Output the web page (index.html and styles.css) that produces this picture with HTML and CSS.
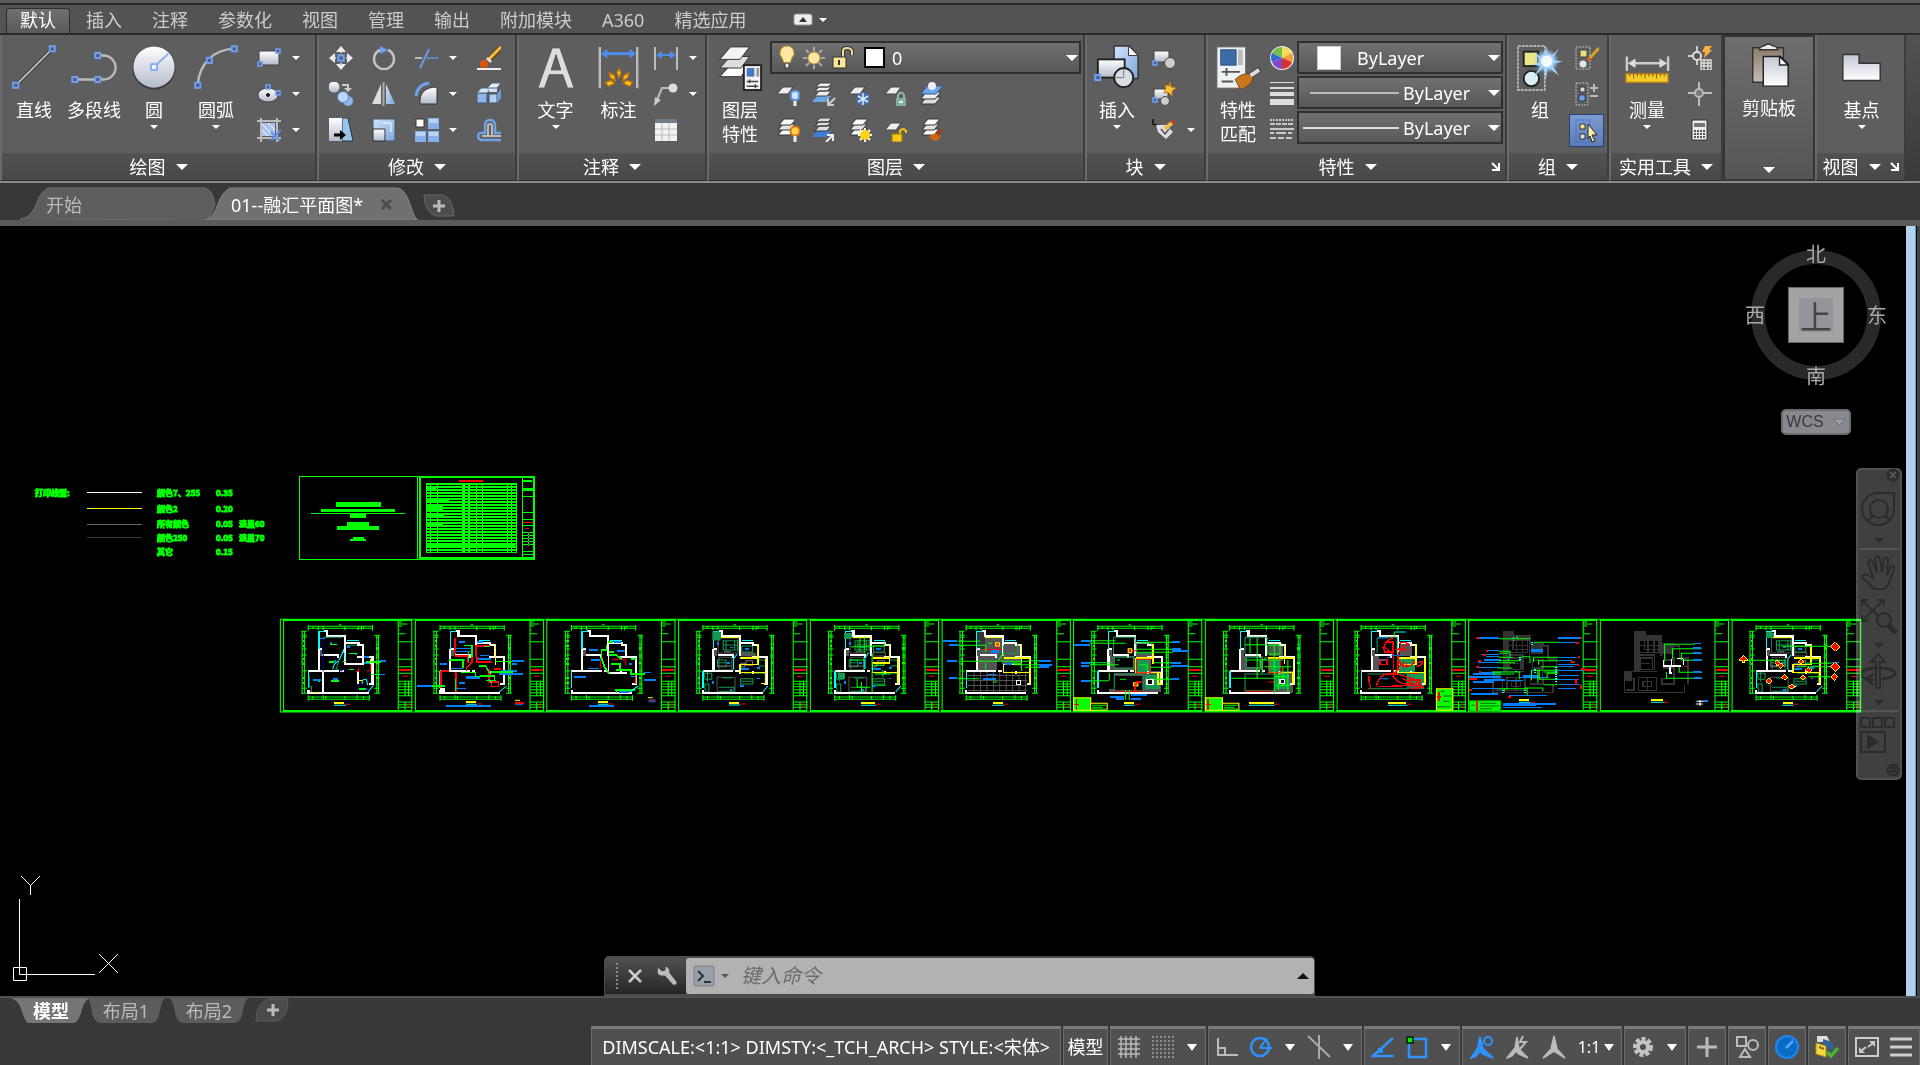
FILE: index.html
```html
<!DOCTYPE html>
<html lang="zh-CN">
<head>
    <meta charset="UTF-8">
    <meta name="viewport" content="width=device-width, initial-scale=1.0">
    <title>01--融汇平面图</title>
    <link rel="stylesheet" href="styles.css">
</head>
<body>
    <!-- shared gradients and symbols -->
    <svg class="defs" width="0" height="0" aria-hidden="true">
        <defs>
            <linearGradient id="silver" x1="0" y1="0" x2="0" y2="1"><stop offset="0" stop-color="#fff"/><stop offset="1" stop-color="#b4bac9"/></linearGradient>
            <linearGradient id="silver-up" x1="0" y1="0" x2="0" y2="1"><stop offset="0" stop-color="#c3c7d2"/><stop offset="1" stop-color="#fff"/></linearGradient>
            <linearGradient id="ice" x1="0" y1="0" x2="1" y2="1"><stop offset="0" stop-color="#d3e5fa"/><stop offset="1" stop-color="#7ba6de"/></linearGradient>
            <linearGradient id="brown" x1="0" y1="0" x2="0" y2="1"><stop offset="0" stop-color="#8d7b6a"/><stop offset="1" stop-color="#c5bcb2"/></linearGradient>
            <radialGradient id="glow"><stop offset="0" stop-color="#fff"/><stop offset=".5" stop-color="#bfe2ff"/><stop offset="1" stop-color="#7fc0f8" stop-opacity="0"/></radialGradient>
            <symbol id="node" viewBox="0 0 6 6"><rect x="1" y="1" width="4" height="4" fill="#4a5c80" stroke="#6f9ff0" stroke-width="1.6"/></symbol>
            <symbol id="sheets" viewBox="0 0 24 24">
                <path d="M7 13h12l-5 6H2z" fill="#fff" stroke="#333"/><path d="M7 8h12l-5 6H2z" fill="#e4e4e4" stroke="#333"/><path d="M8 3h12l-5 6H3z" fill="#fff" stroke="#333"/>
            </symbol>
            <symbol id="sheet" viewBox="0 0 24 24"><path d="M7 5h10l-5 7H1z" fill="#eee" stroke="#444"/></symbol>
        </defs>
    </svg>

    <nav class="menu">
        <button class="menu-tab active">默认</button>
        <button class="menu-tab">插入</button>
        <button class="menu-tab">注释</button>
        <button class="menu-tab">参数化</button>
        <button class="menu-tab">视图</button>
        <button class="menu-tab">管理</button>
        <button class="menu-tab">输出</button>
        <button class="menu-tab">附加模块</button>
        <button class="menu-tab">A360</button>
        <button class="menu-tab">精选应用</button>
        <button class="menu-min" aria-label="最小化功能区">
            <svg width="20" height="14" viewBox="0 0 20 14"><rect x="1" y="1" width="18" height="11" rx="2" fill="#eee" stroke="#999"/><path d="M6 9l4-5 4 5z" fill="#333"/></svg>
            <span class="arrow"></span>
        </button>
    </nav>

    <main class="ribbon">
        <section class="panel draw">
            <div class="panel-body">
                <button class="big">
                    <svg viewBox="0 0 48 48"><path d="M5 42L43 4" stroke="#333" stroke-width="4"/><path d="M5 42L43 4" stroke="#bbb" stroke-width="2"/><use href="#node" x="1" y="38" width="8" height="8"/><use href="#node" x="39" y="0" width="8" height="8"/></svg>
                    <span>直线</span>
                </button>
                <button class="big">
                    <svg viewBox="0 0 48 48"><path d="M4 36H34a12 12 0 0 0 0-25H28" fill="none" stroke="#bbb" stroke-width="2.5"/><use href="#node" x="0" y="32" width="8" height="8"/><use href="#node" x="24" y="32" width="8" height="8"/><use href="#node" x="24" y="7" width="8" height="8"/></svg>
                    <span>多段线</span>
                </button>
                <button class="big">
                    <svg viewBox="0 0 48 48"><circle cx="24" cy="24" r="22.5" fill="#3c3c3c"/><circle cx="24" cy="23" r="21.5" fill="url(#silver)"/><path d="M26 21L39 9" stroke="#7eaef5" stroke-width="2"/><rect x="21" y="20" width="6" height="6" fill="#fff" stroke="#7eaef5" stroke-width="2"/></svg>
                    <span>圆</span><i class="arrow"></i>
                </button>
                <button class="big">
                    <svg viewBox="0 0 48 48"><path d="M5 42C6 20 22 4 43 4" fill="none" stroke="#bbb" stroke-width="2.5"/><use href="#node" x="1" y="38" width="8" height="8"/><use href="#node" x="13" y="12" width="8" height="8"/><use href="#node" x="39" y="0" width="8" height="8"/></svg>
                    <span>圆弧</span><i class="arrow"></i>
                </button>
                <div class="tools with-drop">
                    <button class="tool" aria-label="矩形"><svg viewBox="0 0 24 24"><rect x="2" y="5" width="20" height="14" fill="url(#silver)" stroke="#444"/><use href="#node" x="18" y="2" width="6" height="6"/><use href="#node" x="0" y="15" width="6" height="6"/></svg></button><button class="drop" aria-label="矩形选项"></button>
                    <button class="tool" aria-label="椭圆"><svg viewBox="0 0 24 24"><ellipse cx="11" cy="13" rx="10" ry="7" fill="url(#silver)" stroke="#444"/><path d="M11 11v4M9 13h4" stroke="#222" stroke-width="2"/><use href="#node" x="8" y="2" width="6" height="6"/><use href="#node" x="18" y="8" width="6" height="6"/></svg></button><button class="drop" aria-label="椭圆选项"></button>
                    <button class="tool" aria-label="图案填充"><svg viewBox="0 0 24 24"><path d="M0 3h24M0 20h24M4 0v24M20 0v24" stroke="#bbb" stroke-width="2"/><rect x="5" y="5" width="13" height="13" fill="#a9c4ee"/><path d="M5 12l6 6M5 6l12 12M11 5l7 7" stroke="#fff"/><path d="M14 22l10-10M14 14l9 9" stroke="#5b90e6" stroke-width="2"/></svg></button><button class="drop" aria-label="图案填充选项"></button>
                </div>
            </div>
            <button class="panel-title">绘图<i class="arrow"></i></button>
        </section>

        <section class="panel modify">
            <div class="panel-body">
                <div class="tools four">
                    <button class="tool" aria-label="移动"><svg viewBox="0 0 24 24"><path d="M12 0l5 6H7zM12 24l5-6H7zM0 12l6-5v10zM24 12l-6-5v10z" fill="#eee"/><path d="M5 12h14M12 5v14" stroke="#ccc" stroke-width="2"/><path d="M7 7h10v10H7z" fill="#5e5e5e"/><use href="#node" x="8" y="8" width="8" height="8"/></svg></button>
                    <button class="tool" aria-label="旋转"><svg viewBox="0 0 24 24"><path d="M8 4a10 10 0 1 0 8 0" fill="none" stroke="#c5c5c5" stroke-width="2.5"/><path d="M8 0v8l8-4z" fill="#6ba1f3"/></svg></button>
                    <button class="tool" aria-label="修剪"><svg viewBox="0 0 24 24"><path d="M0 12h7" stroke="#bbb" stroke-width="2"/><path d="M12 12h12" stroke="#5e91df" stroke-width="2" stroke-dasharray="3 1"/><path d="M5 22L14 3" stroke="#6a9ae3" stroke-width="2"/></svg></button><button class="drop" aria-label="修剪选项"></button>
                    <button class="tool" aria-label="删除"><svg viewBox="0 0 24 24"><path d="M0 23h24" stroke="#eee" stroke-width="2"/><path d="M11 15L24 1" stroke="#6d4a10" stroke-width="6"/><path d="M11 14L24 1" stroke="#f3bd48" stroke-width="3"/><path d="M11 15l2-2" stroke="#ddd" stroke-width="6"/><circle cx="7" cy="18" r="4" fill="#e0510f"/></svg></button>
                    <button class="tool" aria-label="复制"><svg viewBox="0 0 24 24"><circle cx="5" cy="5" r="5.5" fill="url(#silver)"/><circle cx="19" cy="19" r="5" fill="#8bb6ec"/><circle cx="14" cy="15" r="5.5" fill="#bdd6f7" stroke="#5b83bd"/><path d="M13 3h6v4" fill="none" stroke="#ccc" stroke-width="2"/><path d="M15 6h8l-4 4z" fill="#ccc"/></svg></button>
                    <button class="tool" aria-label="镜像"><svg viewBox="0 0 24 24"><path d="M9 2v20H0z" fill="#ddd"/><path d="M14 2v20h9z" fill="url(#ice)"/><path d="M11.5 0v24" stroke="#aaa" stroke-width="2"/></svg></button>
                    <button class="tool" aria-label="圆角"><svg viewBox="0 0 24 24"><path d="M1 14C2 6 7 2 14 1" fill="none" stroke="#6fa3ee" stroke-width="3"/><path d="M5 22C4 11 10 5 22 5v17z" fill="url(#silver)" stroke="#333"/></svg></button><button class="drop" aria-label="圆角选项"></button>
                    <button class="tool" aria-label="分解"><svg viewBox="0 0 24 24"><path d="M0 11h10v10H0z" fill="#8bb6ec" stroke="#456"/><path d="M0 11l4-5h10l-4 5z" fill="#d2e5fb" stroke="#567"/><path d="M12 12h8v9h-8z" fill="#b2cff2" stroke="#456"/><path d="M20 12l4-5v9l-4 5z" fill="#6f9cd6"/><path d="M12 6h8v4h-8z" fill="#cfe2fa"/><path d="M10 6l5-5h9l-4 5z" fill="#e2eefc" stroke="#567"/></svg></button>
                    <button class="tool" aria-label="拉伸"><svg viewBox="0 0 24 24"><path d="M13 0h6l5 23H13z" fill="#9ac3e8" stroke="#234"/><path d="M0 0h13v23H0z" fill="url(#silver)"/><path d="M5 17h7" stroke="#000" stroke-width="3"/><path d="M11 12l6 5-6 5z"/></svg></button>
                    <button class="tool" aria-label="缩放"><svg viewBox="0 0 24 24"><path d="M1 1h22v22H1z" fill="url(#ice)" stroke="#456"/><path d="M1 11h12v12H1z" fill="url(#silver)" stroke="#333"/><path d="M11 5h8v9" fill="none" stroke="#fff"/></svg></button>
                    <button class="tool" aria-label="阵列"><svg viewBox="0 0 24 24"><path d="M1 1h8v8H1z" fill="#fff" stroke="#333"/><path d="M13 0h11v11H13zM0 13h11v11H0zM13 13h11v11H13z" fill="#86b0ec"/><path d="M14 1h9v4h-9zM1 14h9v4H1zM14 14h9v4h-9z" fill="#b9d3f7"/></svg></button><button class="drop" aria-label="阵列选项"></button>
                    <button class="tool" aria-label="偏移"><svg viewBox="0 0 24 24"><path d="M24 22H4q-3-1-3-4t3-3h4V6q1-4 5-4t5 4v9h6" fill="none" stroke="#6da2e8" stroke-width="2.5"/><path d="M24 18H5h6V7q2-2 4 0v11" fill="none" stroke="#bbb" stroke-width="2"/></svg></button>
                </div>
            </div>
            <button class="panel-title">修改<i class="arrow"></i></button>
        </section>

        <section class="panel annotate">
            <div class="panel-body">
                <button class="big">
                    <svg viewBox="0 0 48 48"><path d="M20 3h8l15 42h-7l-5-14H17l-5 14H5zM19 26h10L24 10z" fill="#ddd" stroke="#555"/></svg>
                    <span>文字</span><i class="arrow"></i>
                </button>
                <button class="big">
                    <svg viewBox="0 0 48 48"><path d="M4 2v43M43 2v43" stroke="#bbb" stroke-width="2.5"/><path d="M8 9h31" stroke="#4f8df0" stroke-width="3"/><path d="M5 9l7-5v10zM42 9l-7-5v10z" fill="#4f8df0"/><path d="M24 25l2 4-2 5-2-5zM14 29l5 3 1 5-5-3zM34 29l-5 3-1 5 5-3zM10 39l6-2 3 3-6 3zM38 39l-6-2-3 3 6 3z" fill="#fbd01f" stroke="#d2770c" stroke-width="1.5"/></svg>
                    <span>标注</span>
                </button>
                <div class="tools with-drop">
                    <button class="tool" aria-label="线性"><svg viewBox="0 0 24 24"><path d="M1 1v23M23 1v23" stroke="#bbb" stroke-width="2"/><path d="M4 9h16" stroke="#4f8df0" stroke-width="2"/><path d="M2 9l6-4v8zM22 9l-6-4v8z" fill="#4f8df0"/></svg></button><button class="drop" aria-label="线性选项"></button>
                    <button class="tool" aria-label="引线"><svg viewBox="0 0 24 24"><path d="M3 18L8 6h8" fill="none" stroke="#bbb" stroke-width="2"/><circle cx="19" cy="6" r="4.5" fill="#ddd"/><path d="M0 24l1-9 6 3z" fill="#ccc"/></svg></button><button class="drop" aria-label="引线选项"></button>
                    <button class="tool" aria-label="表格"><svg viewBox="0 0 24 24"><path d="M1 1h22v22H1z" fill="#f2f2f2"/><path d="M1 1h22v4H1z" fill="#747c8c"/><path d="M1 11h22M1 17h22M8 5v18M15 5v18" stroke="#bbb"/></svg></button>
                </div>
            </div>
            <button class="panel-title">注释<i class="arrow"></i></button>
        </section>

        <section class="panel layers">
            <div class="panel-body">
                <button class="big">
                    <svg viewBox="0 0 48 48"><path d="M14 21h20L25 33H3z" fill="#fff" stroke="#333"/><path d="M14 12h20L25 24H3z" fill="#ddd" stroke="#333"/><path d="M14 2h20L24 15H3z" fill="#f4f4f4" stroke="#333"/><rect x="28" y="21" width="18" height="26" fill="#f3f3f3" stroke="#222" stroke-width="2"/><rect x="31" y="24" width="8" height="9" fill="#4779c4"/><path d="M41 24h3v9h-3z" fill="#999"/><path d="M31 38h12M31 43h12M34 36v4M40 41v4" stroke="#444" stroke-width="1.5"/></svg>
                    <span>图层<br>特性</span>
                </button>
                <div class="layer-side">
                    <label class="combo">
                        <svg width="20" height="26" viewBox="0 0 20 26"><path d="M10 1a7 7 0 0 0-5 12l2 5h6l2-5A7 7 0 0 0 10 1z" fill="#ffe9a0" stroke="#b88a20"/><path d="M8 18h4v5H8z" fill="#eee" stroke="#333"/></svg>
                        <svg width="24" height="24" viewBox="0 0 24 24"><path d="M12 1v22M1 12h22M4 4l16 16M20 4L4 20" stroke="#aaa" stroke-width="2" stroke-dasharray="4 14 5"/><circle cx="12" cy="12" r="6" fill="#ffe7a0" stroke="#c79b43"/></svg>
                        <svg width="24" height="24" viewBox="0 0 24 24"><path d="M12 12V5q0-3 4-3t5 3v4" fill="none" stroke="#333" stroke-width="4"/><path d="M12 12V5q0-3 4-3t5 3v4" fill="none" stroke="#f3dd94" stroke-width="2"/><path d="M2 11h13v11H2z" fill="#fbe697" stroke="#333"/><path d="M8 14v5" stroke="#333" stroke-width="2"/></svg>
                        <span class="swatch black"></span>
                        <select aria-label="图层"><option>0</option></select>
                    </label>
                    <div class="tools five">
                        <button class="tool" aria-label="关"><svg viewBox="0 0 24 24"><use href="#sheet"/><rect x="15" y="9" width="8" height="9" rx="3" fill="#cfe5ff" stroke="#5d93d8" stroke-width="2"/><path d="M19 19v5" stroke="#eee" stroke-width="3"/></svg></button>
                        <button class="tool" aria-label="隔离"><svg viewBox="0 0 24 24"><path d="M5 14h14l-5 6H0z" fill="#6ea5e4"/><path d="M7 9h12l-4 5H3zM7 5h12l-4 4H3zM8 1h12l-4 4H4z" fill="#eee" stroke="#444"/><path d="M23 16l-7 7m0-6v6h6" fill="none" stroke="#ccc" stroke-width="2"/></svg></button>
                        <button class="tool" aria-label="冻结"><svg viewBox="0 0 24 24"><use href="#sheet"/><circle cx="15" cy="17" r="6.5" fill="#3f75bd"/><path d="M15 11v12M10 14l10 6M20 14l-10 6" stroke="#dfebff" stroke-width="1.5"/></svg></button>
                        <button class="tool" aria-label="锁定"><svg viewBox="0 0 24 24"><use href="#sheet"/><path d="M14 16v-3q3-5 6 0v3" fill="none" stroke="#8fb8b0" stroke-width="2"/><path d="M12 16h10v8H12z" fill="#82aea4"/><path d="M15 20h4" stroke="#e2f2ee" stroke-width="2"/></svg></button>
                        <button class="tool" aria-label="置为当前"><svg viewBox="0 0 24 24"><path d="M6 15h15l-6 7H1z" fill="#ddd" stroke="#333"/><path d="M6 10h15l-6 7H1z" fill="#eee" stroke="#333"/><path d="M7 4h16l-7 8H1z" fill="#6fa5ea" stroke="#355b8e"/><circle cx="12" cy="4" r="4" fill="#eee"/></svg></button>
                        <button class="tool" aria-label="打开所有图层"><svg viewBox="0 0 24 24"><use href="#sheets" y="-2"/><circle cx="19" cy="13" r="4.5" fill="#ffd34c" stroke="#df7810" stroke-width="2"/><path d="M19 18v6" stroke="#eee" stroke-width="3"/></svg></button>
                        <button class="tool" aria-label="取消隔离"><svg viewBox="0 0 24 24"><path d="M5 13h14l-5 6H0z" fill="#3f7ed8"/><path d="M7 8h12l-4 5H3zM7 4h12l-4 4H3zM8 0h12l-4 4H4z" fill="#ddd" stroke="#333"/><path d="M14 24l7-7m-6 0h6v6" fill="none" stroke="#eee" stroke-width="2"/></svg></button>
                        <button class="tool" aria-label="解冻"><svg viewBox="0 0 24 24"><use href="#sheets" y="-2"/><path d="M17 10v14M10 17h14M12 12l10 10M22 12L12 22" stroke="#fff" stroke-width="2"/><circle cx="17" cy="17" r="5" fill="#ffd317"/></svg></button>
                        <button class="tool" aria-label="解锁"><svg viewBox="0 0 24 24"><use href="#sheet"/><path d="M16 17v-4q3-4 6 0v2" fill="none" stroke="#f4c40e" stroke-width="2"/><path d="M8 16h10v8H8z" fill="#f5c717" stroke="#9a7700"/></svg></button>
                        <button class="tool" aria-label="匹配图层"><svg viewBox="0 0 24 24"><use href="#sheets" y="-2"/><path d="M9 18l7-3 5 3-4 5-5-1z" fill="#cc6715"/><path d="M17 17l5-5" stroke="#a73b0c" stroke-width="3"/></svg></button>
                    </div>
                </div>
            </div>
            <button class="panel-title">图层<i class="arrow"></i></button>
        </section>

        <section class="panel block">
            <div class="panel-body">
                <button class="big">
                    <svg viewBox="0 0 48 48"><path d="M21 1h16l9 10v24H21z" fill="url(#ice)" stroke="#333" stroke-width="1.5"/><path d="M36 1v10h10z" fill="#fff" stroke="#333"/><rect x="4" y="15" width="28" height="19" fill="url(#silver)" stroke="#222" stroke-width="2"/><circle cx="31" cy="34" r="10" fill="#d8dce4" stroke="#222" stroke-width="2"/><path d="M31 25v9h-8" fill="none" stroke="#777"/><use href="#node" x="0" y="30" width="8" height="8"/></svg>
                    <span>插入</span><i class="arrow"></i>
                </button>
                <div class="tools with-drop">
                    <button class="tool" aria-label="创建块"><svg viewBox="0 0 24 24"><rect x="2" y="5" width="15" height="11" fill="url(#silver)" stroke="#444"/><circle cx="18" cy="17" r="5.5" fill="#ccc" stroke="#444"/><use href="#node" x="0" y="14" width="6" height="6"/></svg></button><span></span>
                    <button class="tool" aria-label="编辑块"><svg viewBox="0 0 24 24"><rect x="2" y="7" width="14" height="10" fill="url(#silver)" stroke="#444"/><circle cx="13" cy="19" r="4.5" fill="#ccc" stroke="#444"/><path d="M18 0l1 5 5 1-4 3v5l-4-4-4 1 2-5-1-3 4 1z" fill="#ffc43a" stroke="#c87a10"/><use href="#node" x="0" y="15" width="6" height="6"/></svg></button><span></span>
                    <button class="tool" aria-label="编辑属性"><svg viewBox="0 0 24 24"><path d="M1 1v5l6 2" fill="none" stroke="#222" stroke-width="2"/><path d="M4 7h10l7 7-7 7-8-7z" fill="#ddd"/><path d="M9 11l4 5 4-5" fill="none" stroke="#555" stroke-width="1.5"/><path d="M13 11L22 3" stroke="#f3b84a" stroke-width="4"/><path d="M20 5l2-2" stroke="#b33b14" stroke-width="5"/></svg></button><button class="drop" aria-label="编辑属性选项"></button>
                </div>
            </div>
            <button class="panel-title">块<i class="arrow"></i></button>
        </section>

        <section class="panel properties">
            <div class="panel-body">
                <button class="big">
                    <svg viewBox="0 0 48 48"><rect x="2" y="2" width="30" height="43" fill="#eff2f5" stroke="#666"/><rect x="6" y="5" width="16" height="16" fill="#3c6ca8" stroke="#274f80"/><path d="M24 5h5v16h-5z" fill="#bbb"/><path d="M7 28h19M7 38h12M12 24v8" stroke="#555" stroke-width="2"/><path d="M21 36q8-8 17-5l2 3q-3 10-14 12-2-5-5-10z" fill="#c9761c" stroke="#754310"/><path d="M37 32l10-7" stroke="#444" stroke-width="6"/><path d="M37 32l9-6" stroke="#ddd" stroke-width="4"/></svg>
                    <span>特性<br>匹配</span>
                </button>
                <div class="tools">
                    <button class="tool" aria-label="颜色"><svg viewBox="0 0 24 24"><circle cx="12" cy="12" r="12" fill="#eee"/><path d="M12 12L2 7A11 11 0 0 1 12 1z" fill="#75c04b"/><path d="M12 12V1a11 11 0 0 1 10 6z" fill="#f3dc57"/><path d="M12 12l10-5a11 11 0 0 1 0 9z" fill="#ee9c3e"/><path d="M12 12l10 4a11 11 0 0 1-10 7z" fill="#db3030"/><path d="M12 12v11a11 11 0 0 1-10-7z" fill="#8746c9"/><path d="M12 12L2 16a11 11 0 0 1 0-9z" fill="#2e69d6"/></svg></button>
                    <button class="tool" aria-label="线宽"><svg viewBox="0 0 24 24"><path d="M0 0h24v1H0zM0 5h24v2H0zM0 10h24v4H0zM0 17h24v6H0z" fill="#ddd"/></svg></button>
                    <button class="tool" aria-label="线型"><svg viewBox="0 0 24 24"><g stroke="#c8c8c8" stroke-width="2"><path d="M0 2h24" stroke-dasharray="2 1"/><path d="M0 6h24" stroke-dasharray="5 1"/><path d="M0 11h24"/><path d="M0 15h24" stroke-dasharray="4 2 10 2"/><path d="M0 20h24" stroke-dasharray="6 2"/></g></svg></button>
                </div>
                <div class="combos">
                    <label class="combo"><span class="swatch"></span><select aria-label="对象颜色"><option>ByLayer</option></select></label>
                    <label class="combo line"><span class="stroke thin"></span><select aria-label="线宽"><option>ByLayer</option></select></label>
                    <label class="combo line"><span class="stroke"></span><select aria-label="线型"><option>ByLayer</option></select></label>
                </div>
            </div>
            <div class="panel-title"><button>特性<i class="arrow"></i></button><button class="launch" aria-label="特性设置"><svg width="10" height="10" viewBox="0 0 10 10"><path d="M1 1l6 6M8 1v7H1" fill="none" stroke="#fff" stroke-width="2"/></svg></button></div>
        </section>

        <section class="panel group">
            <div class="panel-body">
                <button class="big">
                    <svg viewBox="0 0 48 48"><path d="M1 1h28v46H1z" fill="none" stroke="#ccc" stroke-width="1.5" stroke-dasharray="3 1"/><rect x="7" y="7" width="15" height="15" fill="#ece687" stroke="#222" stroke-width="2"/><circle cx="15" cy="35" r="8" fill="#d9f0f5" stroke="#222" stroke-width="2"/><circle cx="31" cy="17" r="13" fill="url(#glow)"/><path d="M31 1l2 13 11-10-8 12 12 1-12 3 8 12-12-9-2 14-2-14-12 12 9-13-10-2 10-2-7-11 10 8z" fill="#9dd2ff"/><circle cx="31" cy="17" r="6" fill="#f4fbff"/></svg>
                    <span>组</span>
                </button>
                <div class="tools">
                    <button class="tool" aria-label="取消编组"><svg viewBox="0 0 24 24"><path d="M1 1h14v22H1z" fill="none" stroke="#bbb" stroke-dasharray="2 1"/><path d="M5 4h7v7H5z" fill="#e8df7c" stroke="#444"/><circle cx="8" cy="18" r="3.5" fill="#d9eaf0"/><path d="M13 14l11-12" stroke="#d9a51b" stroke-width="3"/><path d="M13 14l2-2" stroke="#e34b2a" stroke-width="3"/></svg></button>
                    <button class="tool" aria-label="组编辑"><svg viewBox="0 0 24 24"><path d="M1 1h12v22H1z" fill="none" stroke="#bbb" stroke-dasharray="2 1"/><path d="M5 5h5v5H5z" fill="#ddd" stroke="#333"/><circle cx="7" cy="16" r="3.5" fill="#71a3e4" stroke="#234"/><path d="M15 6h8M19 2v8M15 14h8" stroke="#bbb" stroke-width="2"/></svg></button>
                    <button class="tool pressed" aria-label="组选择"><svg viewBox="0 0 24 24"><path d="M1 1h14v22H1z" fill="none" stroke="#2f6fe0" stroke-dasharray="2 1"/><path d="M5 5h5v5H5z" fill="#eee78b" stroke="#333"/><path d="M5 15h5v5H5z" fill="#ddd" stroke="#333"/><path d="M13 5l9 11h-5l3 6-3 1-2-6-2 3z" fill="#f7efa4" stroke="#222"/></svg></button>
                </div>
            </div>
            <button class="panel-title">组<i class="arrow"></i></button>
        </section>

        <section class="panel utility">
            <div class="panel-body">
                <button class="big">
                    <svg viewBox="0 0 48 48"><path d="M3 12v15M46 12v15" stroke="#ccc" stroke-width="2.5"/><path d="M8 19h33" stroke="#ccc" stroke-width="2.5"/><path d="M4 19l8-5v10zM45 19l-8-5v10z" fill="#ddd"/><rect x="2" y="30" width="44" height="9" fill="#f7cd2c" stroke="#b47f17" stroke-width="1.5"/><path d="M6 30v3M10 30v5M14 30v3M18 30v3M22 30v5M26 30v3M30 30v3M34 30v5M38 30v3M42 30v3" stroke="#7d5a12"/></svg>
                    <span>测量</span><i class="arrow"></i>
                </button>
                <div class="tools">
                    <button class="tool" aria-label="快速选择"><svg viewBox="0 0 24 24"><path d="M9 0v19M0 10h14" stroke="#ccc" stroke-width="2"/><circle cx="9" cy="10" r="4" fill="#555" stroke="#ddd" stroke-width="2"/><path d="M17 0h7l-3 4h3l-8 8 1-6h-3z" fill="#ffb13b"/><path d="M13 14h10v10H13zM13 17h10M13 20h10M16 14v10M20 14v10" fill="#555" stroke="#ddd" stroke-width="1.5"/></svg></button>
                    <button class="tool" aria-label="点坐标"><svg viewBox="0 0 24 24"><path d="M11 0v24M0 11h24" stroke="#bbb" stroke-width="2"/><circle cx="11" cy="11" r="4" fill="#777" stroke="#bbb" stroke-width="2"/></svg></button>
                    <button class="tool" aria-label="计算器"><svg viewBox="0 0 24 24"><rect x="4" y="2" width="15" height="20" rx="1" fill="#eee" stroke="#333"/><path d="M6 5h11v4H6z" fill="#777"/><path d="M6 13h11M6 16h11M6 19h11" stroke="#555" stroke-width="2" stroke-dasharray="2 1"/></svg></button>
                </div>
            </div>
            <button class="panel-title">实用工具<i class="arrow"></i></button>
        </section>

        <section class="panel clipboard">
            <button class="big">
                <svg viewBox="0 0 48 48"><path d="M7 5h32v36H7z" fill="url(#brown)" stroke="#333" stroke-width="1.5"/><path d="M14 7q0-3 5-4 4-4 9 0 4 0 5 4z" fill="#eee" stroke="#333" stroke-width="1.5"/><path d="M18 14h18l8 8v23H18z" fill="url(#silver-up)" stroke="#222" stroke-width="1.5"/><path d="M35 14v9h9z" fill="#fff" stroke="#222" stroke-width="1.5"/></svg>
                <span>剪贴板</span>
            </button>
            <i class="arrow large"></i>
        </section>

        <section class="panel view">
            <div class="panel-body">
                <button class="big">
                    <svg viewBox="0 0 48 48"><path d="M4 10h17v9h22v18H4z" fill="url(#silver-up)" stroke="#333" stroke-width="1.5"/></svg>
                    <span>基点</span><i class="arrow"></i>
                </button>
            </div>
            <div class="panel-title"><button>视图<i class="arrow"></i></button><button class="launch" aria-label="视图设置"><svg width="10" height="10" viewBox="0 0 10 10"><path d="M1 1l6 6M8 1v7H1" fill="none" stroke="#fff" stroke-width="2"/></svg></button></div>
        </section>
        <div class="ribbon-end"></div>
    </main>

    <nav class="files">
        <button class="file start">
            <svg viewBox="0 0 208 34" preserveAspectRatio="none"><path d="M0 33Q12 32 17 18T30 1H196Q205 3 207 18L200 34z" fill="#5d5d5d" stroke="#6e6e6e"/></svg>
            <span>开始</span>
        </button>
        <button class="file current">
            <svg viewBox="0 0 216 34" preserveAspectRatio="none"><path d="M0 34Q7 32 12 18T25 1H195Q203 2 208 18T216 34z" fill="#707070" stroke="#858585"/></svg>
            <span>01--融汇平面图*</span>
            <svg class="close" width="11" height="11" viewBox="0 0 11 11"><path d="M1 1l9 9M10 1l-9 9" stroke="#4b4b4b" stroke-width="3"/></svg>
        </button>
        <button class="file-add" aria-label="新图形">
            <svg width="34" height="24" viewBox="0 0 34 24"><path d="M2 1H20Q31 3 32 22H14Q3 19 2 1z" fill="#4d4d4d" stroke="#666"/><path d="M17 6v12M11 12h12" stroke="#bbb" stroke-width="3"/></svg>
        </button>
    </nav>

    <div class="workspace">
        <div class="canvas">
            <svg class="drawing" viewBox="0 226 1906 770" preserveAspectRatio="xMinYMin meet" shape-rendering="crispEdges">
                <defs>
                    <pattern id="rows" width="5" height="3" patternUnits="userSpaceOnUse"><path d="M0 0h5v2H0z" fill="#0f0"/></pattern>
                    <pattern id="tiles" width="18" height="15" patternUnits="userSpaceOnUse"><path d="M0 0h18v3H3v12H0z" fill="#545454"/></pattern>

                    <!-- sheet border and title column -->
                    <g id="frame" fill="none" stroke="#0f0" stroke-width="3">
                        <path d="M38 30H397V302H38z"/>
                        <path d="M36 30H399M36 304H399" stroke-width="6"/>
                        <path d="M359 30V302"/>
                        <path d="M359 36h12M359 42h26M359 48h12M359 60h4M359 71h20M359 95h40M359 148h40M359 170h40M359 190h40M359 214h40M359 222h40M359 230h40M359 239h40M359 248h40M359 257h40M359 276h40M359 284h40M359 292h40M378 214v44M388 214v44M378 276v24"/>
                        <path d="M361 180h34" stroke="red" stroke-width="6"/><path d="M370 199h16M384 282h8M384 291h8" stroke="red"/>
                    </g>
                    <!-- dimension chains -->
                    <g id="dims" fill="none" stroke="#0f0" stroke-width="3">
                        <path d="M107 49H288M107 55H288M107 45v17M120 49v8M135 49v12M149 49v12M210 49v12M247 49v12M256 49v12M262 49v8M287 45v17M193 44h7M90 62V250M97 62V250M87 64h16M90 76h13M92 82h11M92 117h11M88 135h15M92 183h11M90 235h13M87 250h16M87 156h6"/>
                        <path d="M299 76V250M304 76V250M292 76h16M296 82h10M296 103h10M296 135h10M296 142h10M296 183h10M296 222h10M292 235h14M292 250h16"/>
                        <path d="M96 90v6M96 105v6M96 145v6M96 160v6M96 200v6M96 215v6M300 112v8M300 155v8M300 200v8" stroke-width="6"/>
                    </g>
                    <g id="dims-low" fill="none" stroke="#0f0" stroke-width="3"><path d="M107 261H278M107 268H278M107 256v16M120 258v8M149 256v10M156 258v8M210 258v8M244 256v12M262 258v8M278 256v16"/></g>
                    <!-- outer and load-bearing walls -->
                    <g id="walls" fill="none" stroke="#fff" stroke-width="6">
                        <path d="M152 64h8v14h50v20h38v7h13v37h24M210 78v60M136 118h11M136 135h12M137 118v64M107 183h85M197 183h10M149 135h42v8M108 240v9H276M244 142h43v80h-10M247 183v10"/>
                        <path d="M137 117V64h16M216 91h32M108 184v50" stroke="#0ff" stroke-width="4"/>
                        <path d="M139 121h8v18h-8z" fill="#545454" stroke="none"/>
                    </g>
                    <!-- furniture -->
                    <g id="furn" fill="none" stroke-width="3">
                        <path d="M139 68h22v15h-20z" fill="#139a53"/>
                        <path d="M150 84h56v45h-56zM215 128h34v10h-34zM152 142h36v38h-36zM147 202h50v44h-50z" stroke="#545454"/>
                        <path d="M164 92h40v28h-40zM172 92v28M196 92v28M164 105h40M148 150h24v20h-24zM150 158h20M216 108h30v18h-30zM110 190h22v18h-18zM120 185v30M112 222h12v24h-10zM162 204h28M152 232h42v12h-42M213 206h34v16h-34zM216 214h28M222 190h20M262 150h20M262 168h24M252 190h30v28" stroke="#139a53"/>
                        <path d="M166 125h20M168 134h16M146 168h40M214 160h10v10h-10zM228 152h18v14h-18z" stroke="#747474"/>
                        <path d="M150 95v9M182 113h10M224 118h12M176 160h8M136 214v8M214 178h22M258 174h10M260 206h6M212 228h10M182 240h8" stroke="#0080ff" stroke-width="5"/>
                    </g>
                    <g id="plan-ghost" fill="none" stroke="#333" stroke-width="4">
                        <path d="M137 64h28v14h47v22h36v8h14v36h24v78M137 64v120h-29v64h168v-24M149 135h42v45M108 184h90M210 78v60M150 84h54v44h-54zM164 92h40v26h-40zM152 144h34v34h-34zM147 202h50v40h-50zM213 206h34v16h-34zM246 142v80M262 150h20M252 170h30M218 150h30v24h-30zM174 92v36M190 92v36M150 106h54M140 160h40M160 214h24v16h-24zM172 204v38M112 206h22v34h-22"/>
                        <path d="M137 64h28v14h45v12h-70zM112 188h16v24h-16zM215 100h30v30h-30zM138 90h10v90h-10z" fill="#333"/>
                    </g>
                </defs>

                <!-- plot style legend -->
                <g class="legend">
                    <text x="35" y="496">打印线型:</text>
                    <text x="157" y="496">颜色7、255</text><text x="216" y="496">0.35</text>
                    <text x="157" y="512">颜色2</text><text x="216" y="512">0.20</text>
                    <text x="157" y="527">所有颜色</text><text x="216" y="527">0.05</text><text x="239" y="527">淡显60</text>
                    <text x="157" y="541">颜色250</text><text x="216" y="541">0.05</text><text x="239" y="541">淡显70</text>
                    <text x="157" y="555">其它</text><text x="216" y="555">0.15</text>
                </g>
                <path d="M87 492h55v1H87z" fill="#fff"/><path d="M87 508h55v1H87z" fill="#ff0"/><path d="M87 524h55v1H87z" fill="#666"/><path d="M87 537h55v1H87z" fill="#3c3c3c"/>

                <!-- cover and drawing list -->
                <g fill="#0f0">
                    <path d="M299 476h236v84H299zM300 477v82h117v-82zM418 477v82h1v-82zM421 478v79h101v-79zM523 478v79h10v-79z" fill-rule="evenodd"/>
                    <path d="M336 502h45v5h-45zM321 509h74v3h-74zM311 513h94v1h-94zM350 514h16v4h-16zM347 522h22v4h-22zM337 526h42v4h-42zM353 537h11v2h-11zM350 539h16v2h-16z"/>
                    <path d="M523 480h9v2h-9zM523 488h10v3h-10zM523 496h10v1h-10zM523 512h10v1h-10zM523 519h10v1h-10zM523 525h10v1h-10zM523 532h10v1h-10zM523 535h10v1h-10zM523 538h10v1h-10zM523 541h10v1h-10zM523 544h10v1h-10zM523 551h10v1h-10zM523 554h10v1h-10zM528 532v14h1v-14z"/>
                    <path d="M426 483h91v70h-91z" fill="url(#rows)"/>
                    <path d="M426 483h1v70h-1zM430 483h1v70h-1zM437 483h1v70h-1zM462 483h3v70h-3zM468 483h2v70h-2zM476 483h1v70h-1zM482 483h1v70h-1zM507 483h1v70h-1zM511 483h1v70h-1zM516 483h1v70h-1zM427 486h9v3h-9zM427 498h22v3h-22zM427 506h16v4h-16zM427 514h17v3h-17zM427 523h16v4h-16zM427 544h88v3h-88z"/>
                </g>
                <path d="M459 480h24v2h-24zM523 522h10v1h-10zM525 528h4v1h-4z" fill="red"/>

                <!-- strip of twelve plans -->
                <g class="strip" transform="translate(270 610) scale(.35714 .33333)" fill="none" stroke-width="3">
                    <path d="M29 28H4454V306H29z" stroke="#0f0" stroke-width="3"/>
                    <use href="#frame"/><use href="#frame" x="369"/><use href="#frame" x="737"/><use href="#frame" x="1106"/><use href="#frame" x="1475"/><use href="#frame" x="1844"/><use href="#frame" x="2212"/><use href="#frame" x="2581"/><use href="#frame" x="2950"/><use href="#frame" x="3318"/><use href="#frame" x="3687"/><use href="#frame" x="4056"/>
                    <use href="#dims"/><use href="#dims" x="369"/><use href="#dims" x="737"/><use href="#dims" x="1105"/><use href="#dims" x="1474"/><use href="#dims" x="1842"/><use href="#dims" x="2211"/><use href="#dims" x="2580"/><use href="#dims" x="2948"/><use href="#dims" x="4054"/>
                    <use href="#dims-low"/><use href="#dims-low" x="369"/><use href="#dims-low" x="737"/><use href="#dims-low" x="1105"/><use href="#dims-low" x="1474"/><use href="#dims-low" x="1842"/><use href="#dims-low" x="2948"/><use href="#dims-low" x="4054"/>
                    <use href="#furn" x="1105"/><use href="#furn" x="1474"/><use href="#furn" x="4054"/>

                    <!-- fills under the walls: floor, ceiling, water, sockets -->
                    <g transform="translate(1484 0)" stroke="none">
                        <path d="M497 68h22v14h50v14h34v10h16v56h-52v-8h-68v-26h-2z" fill="#545454"/>
                        <path d="M497 66h22v50h-22z" fill="#333"/><path d="M498 138h54v42h-54z" fill="#545454"/>
                        <path d="M470 184h166v62H470z" fill="url(#tiles)"/>
                        <path d="M942 130h44v10h-44zM865 138h74v42h-74zM880 190h80v8h-80zM866 236h12v10h-12zM960 184h52v62h-52z" fill="#545454"/>
                        <path d="M880 142h52v32h-52z" fill="#000"/><path d="M942 148h40v40h-40zM966 194h42v44h-42z" fill="#139a53"/>
                        <path d="M1312 100h40v38h-40zM1236 138h60v42h-60zM1330 184h50v64h-50z" fill="#545454"/>
                        <path d="M1250 142h38v30h-38z" fill="#000"/><path d="M1311 148h34v40h-34zM1330 186h40v50h-40z" fill="#139a53"/>
                    </g>
                    <g transform="translate(2968 0)" stroke="none">
                        <path d="M196 98h34v40h-34zM120 138h16v42h-16zM218 186h46v52h-46z" fill="#545454"/>
                        <path d="M192 148h46v38h-46zM216 186h46v36h-46z" fill="#139a53"/>
                    </g>

                    <use href="#walls"/><use href="#walls" x="368"/><use href="#walls" x="737"/><use href="#walls" x="1105"/><use href="#walls" x="1474"/><use href="#walls" x="1842"/><use href="#walls" x="2211"/><use href="#walls" x="2580"/><use href="#walls" x="2948"/><use href="#walls" x="4054"/>
                    <use href="#plan-ghost" x="3317"/><use href="#plan-ghost" x="3685"/>

                    <!-- plans 1 to 4 -->
                    <path d="M210 130v32h50v-58M149 183v66M247 193v28" stroke="#fff" stroke-width="5"/>
                    <path d="M149 84v100M245 222v24M196 182h16" stroke="#00c" stroke-dasharray="8 4"/>
                    <path d="M149 82h54M214 106h30M110 196v34h6v16M186 176l8-30M182 178h10" stroke="#139a53"/>
                    <path d="M140 86h14M170 97v8M178 154h6M215 112h8M240 128v8M264 142h14M120 210h22M176 208h14M308 154h17M308 194h14M252 238h20M264 160h18" stroke="#0080ff" stroke-width="5"/>
                    <path d="M168 103h20M164 156h14M220 130h24M204 154h10M222 178h14M134 214h6M172 213h22M250 237h16M268 156h42M282 194h26" stroke="#0f0" stroke-width="4"/>
                    <path d="M194 150l12-30 6 30M176 178q2-20 16-24M258 222q-2-16 12-14l4 18M274 246l16-20" stroke="#0ff"/>
                    <path d="M121 247h16M246 212h12M282 146v20" stroke="#ff0" stroke-width="4"/><path d="M240 184h8v-10M272 182h10v-20" stroke="red"/>

                    <path d="M577 104v36M519 84v48M519 138h36v20M579 142v14h44M566 136v20l-16 18v10M520 186v60M628 178h20M614 176v40h26v14h-20v-16" stroke="red" stroke-width="5"/>
                    <path d="M479 182v52M480 183h22M580 108h36" stroke="red" stroke-width="6"/><path d="M631 103v62" stroke="#ff0" stroke-width="4"/>
                    <path d="M520 116h46M522 125h38M588 137h24M582 148h36M528 97h18M580 97h16M476 162h20M508 176h32M528 220h18M522 236h26M536 150h10M677 153h34M677 162h16M648 184h44M640 193h68M412 228h42M492 288h126" stroke="#0080ff" stroke-width="5"/><path d="M548 203h40" stroke="#0080ff" stroke-width="9"/>
                    <path d="M542 106h24v34M500 150h40v24M536 188h40v12h46M556 126v28M584 168h20l10 20M588 198h40v14M630 154h48M620 186h60M604 212h30M454 228h36M520 208v36M600 110h14" stroke="#0f0" stroke-width="4"/>
                    <path d="M642 246l20-18M620 220l-6-12" stroke="#0ff"/>
                    <path d="M477 234h12v12h-12z" fill="#fff"/><path d="M686 271h14" stroke="#ff0"/><path d="M686 279h26" stroke="red" stroke-width="5"/><path d="M686 284h22" stroke="#0080ff"/>

                    <path d="M948 130v60h40M926 144v32M958 148h38v18M1008 192h16v30" stroke="red" stroke-width="3"/><path d="M948 100v86M950 190h50" stroke="#fff" stroke-width="5"/>
                    <path d="M942 104v16h-14v22l8 28 14 22M950 136h20l16 12M956 162h24v20M970 180h40v12h40M946 96h14M948 126h14M966 240h56M970 236v14M1010 148h16" stroke="#0f0" stroke-width="5"/>
                    <path d="M894 121h24M900 150h24M890 176h30M850 202h34M962 97h20M972 124h22M1004 162h10M1048 188h18M1048 210h33M1010 200h16M976 246h30M893 288h70" stroke="#0080ff" stroke-width="5"/>
                    <path d="M1058 263h14" stroke="#ff0"/><path d="M1060 270h20M1060 275h20" stroke="#0080ff"/><path d="M1062 271h16" stroke="red"/><path d="M1008 246l22-18" stroke="#0ff"/>

                    <path d="M1264 82h54M1366 103v60h-50v28M1316 144h48M1388 144v76h-12M1316 188h70" stroke="#ff0" stroke-width="4"/>
                    <path d="M1240 66h20v24h-20z" fill="#139a53" stroke="#139a53"/><path d="M1318 128h44v10h-44z" fill="#545454"/><path d="M1298 180v-34l10-14M1380 246l14-18" stroke="#0ff"/>

                    <!-- plans 5 to 8 -->
                    <g transform="translate(1484 0)">
                        <path d="M148 82h54M251 103v56h-48v30M204 144h46M274 144v78M204 188h70" stroke="#ff0" stroke-width="4"/>
                        <path d="M142 110h60M168 84v40M200 108h36v-16M180 80v50M140 150h40v26M202 130v118M206 166h30M210 192h44M160 206v26h36M214 226h26M172 216v30M232 180v20" stroke="#0f0"/>
                        <path d="M182 178v-34l10-14M268 246l14-18" stroke="#0ff"/>
                        <path d="M124 68h20v20h-20zM106 190h20v16h-20z" fill="#139a53"/>

                        <path d="M518 82h54M620 103v60h-50v26M570 144h74v78M570 188h70" stroke="#ff0" stroke-width="4"/>
                        <path d="M574 130h36v-30M570 106v30" stroke="#139a53"/><path d="M512 119h54M554 96v30" stroke="red" stroke-width="4"/><path d="M548 98h10v10h-10z" fill="red" stroke="#ff0"/>
                        <path d="M442 94h62M442 106h78v20M450 154h190M640 152h30M600 164h70M630 172h40M442 206h60M520 180v-20M570 130l-14 20M590 160h30v24M540 216h12M526 100h12" stroke="#0f0"/>
                        <path d="M400 93h40M418 106h24M412 154h28M418 205h22M670 153h32M670 165h36M670 172h26M524 194h24M512 208h36M574 162h20" stroke="#0080ff" stroke-width="5"/><path d="M534 125h24" stroke="#0080ff" stroke-width="9"/>
                        <path d="M606 212h12v12h-12z" fill="#000" stroke="#fff" stroke-width="4"/>

                        <path d="M878 82h60v20M878 82v50M880 142h54v32h-54zM880 192h80v50h-80zM942 100h44v30h-44z" stroke="#139a53"/>
                        <path d="M988 103v60M940 144h50M940 188h70v34h-8v-36M940 144v44" stroke="#ff0" stroke-width="4"/>
                        <path d="M942 148h38v40h-38zM880 244h80M918 122h28" stroke="red" stroke-width="3"/><path d="M919 116h10v12h-10zM934 218h12v10h-12z" fill="red" stroke="#ff0"/><path d="M938 228v18M942 216h16" stroke="red" stroke-width="5"/>
                        <path d="M812 92h72M812 100h100M812 158h60M812 164h80M812 212h54M866 190v20M940 118h104M940 127h104M950 97h92M990 158h50M980 172h60M990 208h50M912 240v30M922 240v30M950 164h22v16M896 208h18M888 150h8" stroke="#0f0"/>
                        <path d="M787 92h28M767 104h46M787 158h24M787 168h22M787 214h24M1042 97h22M1042 118h26M1042 123h46M1040 159h28M1040 169h46M1040 208h20M868 260h40M926 256h46M886 267h22M928 267h28" stroke="#0080ff" stroke-width="6"/>
                        <path d="M972 208h16v16h-16z" fill="#000" stroke="#fff" stroke-width="4"/>

                        <path d="M1246 82h62v20M1246 82v50M1250 142h40v32h-40zM1246 192h86v50h-86z" stroke="#139a53"/>
                        <path d="M1356 103v60M1310 144h72v78M1310 188h70v34" stroke="#ff0" stroke-width="4"/><path d="M1312 148h34v40h-34zM1246 244h80M1310 216h20" stroke="red"/>
                        <path d="M1246 104h60M1260 84v46M1280 84v120M1248 150h40v24M1208 205h120M1292 150h60M1310 106h34v26h-34zM1328 100v150M1300 170h76M1340 190v50M1366 150v96M1330 200h40M1330 226h44M1294 190v-40l14-8M1352 170v60" stroke="#0f0"/>
                        <path d="M1344 208h12v12h-12z" fill="#000" stroke="#fff" stroke-width="4"/>

                        <g id="notes"><path d="M766 263h48v38h-48z" fill="#0f0" stroke="#ff0"/><path d="M814 280h46v21h-46z" fill="#000" stroke="#ff0"/><path d="M818 286h40M818 292h30M818 297h40" stroke="#0f0"/><path d="M774 266v34M768 284h14" stroke="red" stroke-width="5"/></g>
                        <use href="#notes" x="369"/>
                    </g>

                    <!-- plans 9 to 12 -->
                    <g transform="translate(2968 0)">
                        <path d="M134 82h54v48M132 84v46M106 236h110v-44H104" stroke="#139a53"/><path d="M241 103v60h-50v26M192 144h50M266 144v78M192 188h74v34" stroke="#ff0" stroke-width="4"/>
                        <path d="M180 82q-24 8-28 28l26 24v60l12-14v-44q6-24 30-34M154 96h22v30h-22l-6-16M184 120q16-8 36 2M194 100q14-8 26 2M140 150h20v14h-20zM190 152q24 30 46 6l-4-8M206 152v24M214 156v18M200 160q-20 30-20 34M110 198q-4 14 6 40M130 228q8-36 34-36h24l60 20-10 14-100 4M176 198q20 32 60 22M204 206l54 26-30 4M240 170q20-4 18-16l-14 4M220 190h26M222 210h30v20" stroke="red" stroke-width="4"/>
                        <path d="M180 66v14M180 66h30" stroke="#0f0"/><path d="M184 66h30M136 150h20M160 142h10M140 206h24M172 136h30M132 84h30" stroke="#0080ff"/>
                        <path d="M298 236h46v65h-46z" fill="#0f0" stroke="#ff0"/><path d="M305 246v26M300 262h12" stroke="red" stroke-width="5"/><path d="M310 244h10M318 258h24M316 274h20M300 290h36" stroke="#060"/>

                        <path d="M418 84h54M440 122h34M424 134h50M436 140h38M414 157h60M430 150h50M412 172h60M420 187h60M390 201h90M430 210h60M400 216h60M400 192h62M398 236h74M396 252h74M500 257h108M638 84h66M638 97h56M640 142h52M642 152h36M638 164h54M640 170h44M638 181h70M640 197h56M638 208h60M640 224h60M638 236h50M496 211h44M530 202h82" stroke="#0080ff" stroke-width="4"/><path d="M564 122h32M540 198h46" stroke="#0080ff" stroke-width="7"/>
                        <path d="M474 86h50v-8M474 124h30v20M474 130h26M472 142h40M472 152h60v-12M472 158h46M454 186h80M456 192h60M470 174h40M472 236h80v20M488 246v-12M546 234h50v10M640 97h-70M640 142h-70v14M640 152h-56v12M640 170h-50M638 181h-74v30M638 190h-30v14M640 208h-54v-30M638 224h-40M510 86h50M536 140h24v20M530 184v24M638 186h-40M582 180v38" stroke="#0f0"/>
                        <path d="M409 84h8M436 122h6M428 136h10M414 154h10M410 172h8M418 187h6M390 206h22M390 240h8M700 84h6M688 98h8M694 142h6M676 156h10M692 166h6M704 178h10M690 206v20M702 236v-10M498 261h10" stroke="red" stroke-width="6"/><path d="M514 82v10M566 96v10M500 140v12M532 140v10M564 182v12M520 182v8M484 240v8M546 240v8M632 170v48M574 178v10" stroke="#0ff" stroke-dasharray="4 3" stroke-width="5"/>
                        <path d="M390 272h88v32h-88z" fill="#0f0" stroke="#0a0"/><path d="M411 274v28" stroke="red" stroke-width="5"/><path d="M420 280h46M420 288h54M420 296h34M396 286h10" stroke="#060"/>
                        <path d="M484 282h148M484 287h92M484 292h110" stroke="#0080ff" stroke-width="4"/>

                        <path d="M934 150v18h18v22M956 146v24M956 168h28M990 148v16M950 190h8M972 146h16" stroke="#fff" stroke-width="5"/><path d="M937 154v-51h84M959 146v-30h82M984 150v-20h57M990 151h52M942 186v19h100M978 170v17h64" stroke="#0f0"/><path d="M1019 101h20M1017 115h22M1016 130h24M1016 150h24M1016 187h22M1018 204h22" stroke="#0080ff" stroke-width="5"/><path d="M1026 274h24M1024 282h20M1036 270v18" stroke="#fff"/><path d="M1046 273h12" stroke="#0080ff" stroke-width="6"/><path d="M996 168h6" stroke="red"/>

                        <path d="M1240 82h54M1347 103v60h-50v26M1298 144h74v78M1298 188h72v34" stroke="#ff0" stroke-width="4"/><path d="M1222 66h16v18h-16z" fill="#139a53"/>
                        <path d="M1264 109h140M1168 151h106v20M1330 160h74M1310 170h94M1340 200h62" stroke="#0f0"/><path d="M1404 158h22" stroke="#0080ff" stroke-width="5"/><path d="M1282 180v-34l10-12M1362 246l16-18" stroke="#0ff"/>
                        <path d="M1415 97l12 13-12 12-12-12zM1415 158l12 12-12 13-12-13zM1412 192l8 8-8 10-8-10zM1158 138l10 12h-8v6h-4v-6h-8zM1252 152l8 8-8 6-5-8zM1262 160l6 6-6 8-6-8zM1319 148l7 7-7 6-7-6zM1273 196l7 7-7 5-7-5zM1325 196l6 7-6 5-6-5zM1230 206l7 7-7 8-7-8zM1293 224l8 6-8 6-8-6zM1340 174l8 6-8 7-8-7z" fill="red" stroke="#ff0" stroke-width="4" paint-order="stroke"/>
                    </g>

                    <!-- sheet captions -->
                    <path d="M179 279h28M549 276h28M918 276h28M1285 279h28M1655 279h39M2024 279h28M2391 279h28M2741 279h70M3130 279h51M3497 270h28M3867 270h33M4236 279h28" stroke="#ff0" stroke-width="6"/>
                    <path d="M179 286h34M549 283h30M918 283h30M1285 285h32M1655 286h42M2022 286h33M2391 286h30M2741 286h72M3130 286h54M3497 277h32M3867 277h36M4234 286h32" stroke="#0ff"/>
                    <path d="M210 283h14M580 282h14M949 282h12M1316 282h14M1697 283h14M2056 283h12M2422 283h14M2812 283h12M3184 283h12M3530 277h12M3902 277h12M4266 283h12" stroke="red"/>
                </g>

                <!-- user coordinate system -->
                <g fill="none" stroke="#fff" shape-rendering="auto"><path d="M19.5 899V974.5H95M13.5 967.5H26.5V980.5H13.5zM21 876l9.5 9.5L40 876M30.5 885V895M99 954l19 19M118 954l-19 19"/></g>
            </svg>

            <div class="viewcube">
                <span class="n">北</span><span class="w">西</span>
                <button class="top">上</button>
                <span class="e">东</span><span class="s">南</span>
            </div>
            <button class="wcs">WCS<svg width="14" height="8" viewBox="0 0 14 8"><path d="M1 1h12L7 7z" fill="#9a9fa8" stroke="#6c7078"/></svg></button>

            <div class="navbar">
                <svg viewBox="0 0 46 312" fill="none" stroke="#2a2b2c" stroke-width="2">
                    <rect x="1" y="1" width="44" height="310" rx="4" fill="#404040" stroke="#505050"/>
                    <circle cx="37" cy="7" r="5.5" fill="#2e2e2e"/><path d="M34 4l6 6M40 4l-6 6" stroke="#555"/>
                    <path d="M23 25h15v17a16 16 0 1 1-15-17z"/><circle cx="23" cy="41" r="9"/><path d="M17 48l-6 5M29 48l6 5"/>
                    <path d="M18 70h10l-5 5zM18 175h10l-5 5zM18 232h10l-5 5z" fill="#2a2b2c" stroke="none"/>
                    <path d="M3 81h40M3 243h40" stroke="#555"/>
                    <path d="M18 121C12 113 6 111 6 108q3-4 11 2L12 94q2-4 5 0l4 11-2-15q3-4 5 0l2 14 2-13q4-3 4 2l-1 14 4-9q4-2 3 3l-5 14-4 6z"/>
                    <path d="M6 132l22 22M28 132L6 153M6 138v-6h6M22 132h6v6M6 147v6h6"/><circle cx="28" cy="152" r="7" fill="#3e3e3e"/><path d="M33 158l7 7" stroke-width="5"/>
                    <path d="M20 220v-26h-5l7-8 7 8h-5v26z"/><path d="M17 212C-2 210 2 200 22 200s24 9 4 11M18 206l-8 5 8 6" stroke-width="2.5"/>
                    <path d="M5 250h9v9H5zM17 250h9v9h-9zM29 250h9v9h-9zM5 264h24v20H5z"/><path d="M12 268v12l9-6z" fill="#2a2b2c"/>
                    <circle cx="37" cy="302" r="5.5" fill="#3a3a3a"/><path d="M34 300h6M34 303h6"/>
                </svg>
            </div>

            <div class="command">
                <div class="command-tools">
                    <span class="grip"></span>
                    <button aria-label="关闭"><svg width="14" height="14" viewBox="0 0 14 14"><path d="M1 1l12 12M13 1L1 13" stroke="#ccc" stroke-width="2.5"/></svg></button>
                    <button aria-label="自定义"><svg width="24" height="24" viewBox="0 0 24 24"><path d="M3 3l4 4 3-1V2q5 1 5 7l7 9q0 4-4 3l-8-9q-7 1-8-4z" fill="#bbb" stroke="#444"/></svg></button>
                </div>
                <label class="command-line">
                    <svg width="22" height="22" viewBox="0 0 22 22"><rect x="1" y="1" width="20" height="20" rx="2" fill="#9aa0aa" stroke="#777f8c"/><path d="M5 6l5 5-5 5" fill="none" stroke="#333" stroke-width="2"/><path d="M11 17h7" stroke="#333" stroke-width="2"/></svg>
                    <i class="arrow dark"></i>
                    <input type="text" placeholder="键入命令" aria-label="命令">
                    <i class="arrow up"></i>
                </label>
            </div>
        </div>
        <div class="scroll"></div>
    </div>

    <footer class="bottom">
        <nav class="layouts">
            <button class="layout model"><svg viewBox="0 0 86 26" preserveAspectRatio="none"><path d="M0 0Q10 0 14 14T22 26H66Q71 25 74 12T86 0z" fill="#757575"/></svg><span>模型</span></button>
            <button class="layout first"><svg viewBox="0 0 86 26" preserveAspectRatio="none"><path d="M4 0Q6 2 8 14T17 26H70Q76 25 78 12T86 0z" fill="#5c5c5c"/></svg><span>布局1</span></button>
            <button class="layout"><svg viewBox="0 0 86 26" preserveAspectRatio="none"><path d="M2 0Q6 2 8 14T17 26H70Q76 25 78 12T86 0z" fill="#5c5c5c"/></svg><span>布局2</span></button>
            <button class="layout-add" aria-label="新建布局"><svg width="36" height="24" viewBox="0 0 36 24"><path d="M14 1H34Q34 20 23 23H2Q2 6 14 1z" fill="#4a4a4a" stroke="#5c5c5c"/><path d="M19 6v12M13 12h12" stroke="#bbb" stroke-width="3"/></svg></button>
        </nav>
        <div class="status">
            <div class="seg info">DIMSCALE:&lt;1:1&gt; DIMSTY:&lt;_TCH_ARCH&gt; STYLE:&lt;宋体&gt;</div>
            <div class="seg"><button class="mode">模型</button></div>
            <div class="seg">
                <button aria-label="栅格"><svg viewBox="0 0 24 24"><path d="M4 1v22M9 1v22M14 1v22M19 1v22M1 4h22M1 9h22M1 14h22M1 19h22" stroke="#b8b8b8" stroke-width="1.5"/></svg></button>
                <button aria-label="捕捉"><svg viewBox="0 0 24 24"><path d="M1 2h22M1 6h22M1 10h22M1 14h22M1 18h22M1 22h22" stroke="#a0a0a0" stroke-width="1.5" stroke-dasharray="2 2"/></svg></button>
                <button class="more" aria-label="捕捉设置"></button>
            </div>
            <div class="seg">
                <button aria-label="正交"><svg viewBox="0 0 24 24"><path d="M3 3v17h20M3 13h7v7" fill="none" stroke="#bbb" stroke-width="2"/></svg></button>
                <button aria-label="极轴"><svg viewBox="0 0 24 24"><circle cx="11" cy="12" r="9" fill="none" stroke="#2e93ff" stroke-width="2.5"/><path d="M11 13h12M11 13l7-10" stroke="#2e93ff" stroke-width="2"/></svg></button>
                <button class="more" aria-label="极轴设置"></button>
                <button aria-label="等轴测"><svg viewBox="0 0 24 24"><path d="M1 1l22 21M12 0v24" stroke="#aaa" stroke-width="2"/></svg></button>
                <button class="more" aria-label="等轴测设置"></button>
            </div>
            <div class="seg">
                <button aria-label="对象捕捉追踪"><svg viewBox="0 0 24 24"><path d="M22 3L2 21h21" fill="none" stroke="#2e93ff" stroke-width="2.5"/><path d="M7 13h5v5H7z" fill="#2e93ff"/></svg></button>
                <button aria-label="对象捕捉"><svg viewBox="0 0 24 24"><path d="M4 4h17v18H4z" fill="none" stroke="#2e93ff" stroke-width="2.5"/><path d="M1 1h8v8H1z" fill="#131"/><path d="M3 3h4v4H3z" fill="#0e0"/></svg></button>
                <button class="more" aria-label="捕捉选项"></button>
            </div>
            <div class="seg scales">
                <button aria-label="注释可见性"><svg viewBox="0 0 24 24"><path d="M10 2l3 12 10 9-10-4-3-3-4 5-5 2 7-10z" fill="#2e93ff" stroke="#2e93ff" stroke-width="2"/><circle cx="18" cy="6" r="4" fill="none" stroke="#2e93ff" stroke-width="2"/></svg></button>
                <button aria-label="自动缩放"><svg viewBox="0 0 24 24"><path d="M11 2l2 12 9 9-9-4-3-3-4 5-5 2 8-10z" fill="#bbb" stroke="#bbb" stroke-width="1.5"/><path d="M17 1l-3 6h6l-6 7" fill="none" stroke="#bbb" stroke-width="2"/></svg></button>
                <button aria-label="注释比例"><svg viewBox="0 0 24 24"><path d="M12 1l3 13 8 9-11-7-11 7 8-9z" fill="#bbb" stroke="#bbb" stroke-width="1.5"/></svg></button>
                <button class="scale">1:1<i class="arrow"></i></button>
            </div>
            <div class="seg">
                <button aria-label="切换工作空间"><svg viewBox="0 0 24 24"><circle cx="12" cy="12" r="8" fill="none" stroke="#c4c4c4" stroke-width="4" stroke-dasharray="4 2"/><circle cx="12" cy="12" r="5" fill="none" stroke="#c4c4c4" stroke-width="4"/></svg></button>
                <button class="more" aria-label="工作空间选项"></button>
            </div>
            <div class="seg"><button aria-label="注释监视器"><svg viewBox="0 0 24 24"><path d="M12 2v20M2 12h20" stroke="#bbb" stroke-width="3"/></svg></button></div>
            <div class="seg"><button aria-label="隔离对象"><svg viewBox="0 0 24 24" fill="none" stroke="#bbb" stroke-width="2"><path d="M2 2h9v9H2zM10 14l5 8H5z"/><circle cx="18" cy="10" r="5"/></svg></button></div>
            <div class="seg"><button aria-label="硬件加速"><svg viewBox="0 0 24 24"><circle cx="12" cy="12" r="11" fill="#086cc4" stroke="#1f86f0" stroke-width="2"/><path d="M11 13l7-7" stroke="#52a8f5" stroke-width="2.5"/></svg></button></div>
            <div class="seg"><button aria-label="图形状态"><svg viewBox="0 0 24 24"><path d="M2 1h10l3 6H2z" fill="#ddd"/><path d="M8 4l9 3 3 8-12-3z" fill="#2f6297"/><path d="M1 8l10 3v11L1 19z" fill="#f4d83c" stroke="#ad8d20"/><path d="M4 12l5 2" stroke="#8a6d10" stroke-width="2"/><path d="M12 17l4 4 7-8" fill="none" stroke="#49b32c" stroke-width="3.5"/></svg></button></div>
            <div class="seg last">
                <button aria-label="全屏显示"><svg viewBox="0 0 24 24"><path d="M1 3h22v18H1z" fill="none" stroke="#ccc" stroke-width="2"/><path d="M14 6h6v6zM4 12v6h6z" fill="#ccc"/><path d="M6 16l5-4M13 12l5-4" stroke="#ccc" stroke-width="2"/></svg></button>
                <button aria-label="自定义"><svg viewBox="0 0 24 24"><path d="M1 4h22M1 12h22M1 20h22" stroke="#ccc" stroke-width="3"/></svg></button>
            </div>
        </div>
    </footer>
</body>
</html>
```
FILE: styles.css
```css
* {
    box-sizing: border-box;
}

body {
    margin: 0;
    height: 100vh;
    display: flex;
    flex-direction: column;
    overflow: hidden;
    background: #383838;
    color: #fff;
    font-family: "Noto Sans", "Noto Sans CJK SC", sans-serif;
    font-size: 18px;
    line-height: 24px;
}

button,
select,
input {
    margin: 0;
    padding: 0;
    border: 0;
    background: none;
    color: inherit;
    font: inherit;
}

button {
    display: flex;
    align-items: center;
    justify-content: center;
    white-space: nowrap;
}

.defs {
    position: absolute;
}

/* triangles */
.arrow,
.drop::after,
.more::after,
.combo::after {
    content: "";
    flex: none;
    width: 0;
    height: 0;
    border: 4px solid transparent;
    border-top-color: #fff;
    border-bottom: 0;
}

.panel-title .arrow,
.arrow.large,
.combo::after {
    border-width: 6px 6px 0;
}

/* menu tabs */
.menu {
    flex: none;
    display: flex;
    height: 35px;
    padding: 6px 5px 0;
    background: linear-gradient(#5a5a5a 3px, #2a2a2a 3px, #2a2a2a 5px, #535353 5px);
    border-bottom: 2px solid #2b2b2b;
}

.menu-tab {
    padding: 0 15px;
    color: #ccc;
}

.menu-tab.active {
    margin: 2px 1px 0;
    padding: 0 13px 2px;
    border: 1px solid #2e2e2e;
    border-bottom: 0;
    border-radius: 3px 3px 0 0;
    background: linear-gradient(#707070, #5a5a5a);
    color: #fff;
}

.menu-min {
    gap: 6px;
    margin-left: 32px;
}

/* ribbon */
.ribbon {
    flex: none;
    display: grid;
    grid-template-columns: 317fr 200fr 190fr 378fr 121fr 301fr 102fr 114fr 92fr 91fr 14fr;
    height: 148px;
    border-bottom: 2px solid #8a8a8a;
    background: #5e5e5e;
}

.panel {
    display: flex;
    flex-direction: column;
    min-width: 0;
    border-left: 2px solid #6a6a6a;
    border-right: 2px solid #3d3d3d;
    border-bottom: 1px solid #2a2a2a;
}

.panel-body {
    flex: 1;
    display: flex;
    align-items: flex-start;
    min-height: 0;
}

.panel-title {
    flex: none;
    display: flex;
    align-items: center;
    justify-content: center;
    height: 27px;
    background: linear-gradient(#525252, #484848);
}

.panel-title .arrow {
    margin-left: 10px;
}

.panel-title > button:first-child {
    flex: 1;
}

.big {
    flex: none;
    flex-direction: column;
    justify-content: flex-start;
    width: 60px;
    padding-top: 10px;
}

.big svg {
    flex: none;
    width: 46px;
    height: 46px;
    margin-bottom: 7px;
}

.big .arrow {
    margin-top: 3px;
}

.tools {
    display: grid;
    grid-template-columns: 24px;
    grid-auto-rows: 24px;
    gap: 12px 0;
    margin-top: 11px;
}

.tools.with-drop {
    grid-template-columns: 24px 30px;
}

.tools.four {
    grid-template-columns: 43px 43px 24px 38px 24px;
    justify-items: start;
}

.tools.four .drop {
    width: 28px;
    height: 24px;
}

.tools.five {
    grid-template-columns: repeat(5, 36px);
    margin-top: 8px;
}

.tool svg {
    width: 24px;
    height: 24px;
}

.tool.pressed {
    width: 35px;
    height: 33px;
    margin: -4px 0 0 -6px;
    border: 1px solid #24427c;
    background: linear-gradient(#7d9bd1, #5d7cb4);
}

.draw .panel-body {
    padding-left: 2px;
}

.draw .tools {
    margin-left: 9px;
}

.draw .big:nth-child(4) {
    width: 64px;
}

.modify .panel-body {
    padding-left: 10px;
}

.annotate .panel-body {
    padding-left: 5px;
}

.annotate .big {
    width: 63px;
}

.annotate .tools {
    margin-left: 4px;
}

.layers .panel-body {
    padding-left: 1px;
}

.layer-side {
    flex: 1;
    margin-top: 6px;
    padding-right: 2px;
}

.combo {
    display: flex;
    align-items: center;
    height: 33px;
    padding-right: 1px;
    border: 2px solid #303030;
    background: linear-gradient(#707070, #585858);
}

.combo svg {
    flex: none;
    margin-left: 5px;
}

.combo select {
    flex: 1;
    min-width: 0;
    appearance: none;
    outline: none;
}

.swatch {
    flex: none;
    width: 24px;
    height: 24px;
    margin: 0 16px 0 18px;
    border: 1px solid #ccc;
    background: #fff;
}

.swatch.black {
    width: 21px;
    height: 21px;
    margin: 0 7px 0 9px;
    border: 2px solid #000;
}

.block .tools {
    margin-left: 5px;
}

.properties .tools {
    margin-left: 2px;
}

.combos {
    flex: 1;
    display: grid;
    gap: 2px;
    margin: 6px 2px 0 3px;
}

.stroke {
    flex: none;
    width: 96px;
    height: 2px;
    margin: 0 4px;
    background: #ddd;
}

.stroke.thin {
    width: 89px;
    margin-left: 11px;
    background: #bbb;
}

.group .panel-body {
    padding-left: 1px;
}

.group .tools {
    margin-left: 5px;
}

.utility .tools {
    margin-left: 11px;
}

.utility .big {
    margin-left: 6px;
}

.launch {
    width: 18px;
}

.panel.clipboard {
    align-items: center;
    justify-content: space-between;
    padding-bottom: 6px;
    border: 2px solid #353535;
    background: linear-gradient(#6e6e6e, #555);
}

.clipboard .big {
    padding-top: 6px;
}

.view .panel-body {
    justify-content: center;
    padding-left: 2px;
}

.ribbon-end {
    background: linear-gradient(#525252, #3a3a3a);
}

/* drawing tabs */
.files {
    flex: none;
    display: flex;
    align-items: flex-end;
    height: 43px;
    padding-left: 20px;
    background: #383838;
    border-bottom: 6px solid #5a5a5a;
}

.file {
    position: relative;
    justify-content: flex-start;
    height: 33px;
    padding-top: 2px;
    color: #bbb;
}

.file > svg:first-child {
    position: absolute;
    inset: 0;
    width: 100%;
    height: 100%;
}

.file span,
.close {
    position: relative;
}

.file.start {
    width: 196px;
    padding-left: 26px;
}

.file.current {
    gap: 18px;
    width: 212px;
    margin-left: -10px;
    padding-left: 25px;
    color: #fff;
}

.file-add {
    margin: 0 0 2px 4px;
}

/* model space */
.workspace {
    flex: 1;
    display: flex;
    min-height: 0;
}

.canvas {
    position: relative;
    flex: 1;
    overflow: hidden;
    background: #000;
}

.drawing {
    display: block;
    width: 100%;
    height: 100%;
}

.legend {
    fill: #0f0;
    font-family: "Noto Sans CJK SC", sans-serif;
    font-size: 8px;
    font-weight: bold;
    stroke: #0f0;
    stroke-width: 1px;
}

.scroll {
    flex: none;
    width: 14px;
    background: linear-gradient(90deg, #b6cfeb 9px, #2fb4d8 9px, #2fb4d8 10px, #000 10px, #000 11px, #444 11px);
}

.viewcube {
    position: absolute;
    top: 15px;
    right: 16px;
    display: grid;
    grid-template: 26px 96px 26px / 26px 96px 26px;
    align-items: center;
    justify-items: center;
    color: #aaa;
    font-family: "Noto Sans CJK SC", sans-serif;
    font-size: 20px;
}

.viewcube::before {
    content: "";
    position: absolute;
    inset: 9px;
    border: 14px solid #292929;
    border-radius: 50%;
}

.viewcube span {
    position: relative;
}

.viewcube .n,
.viewcube .s {
    grid-column: 2;
}

.viewcube .w {
    grid-column: 1;
}

.viewcube .top {
    width: 56px;
    height: 56px;
    border: 1px solid #666;
    background: linear-gradient(#93959b, #93959b) center / 34px 34px no-repeat #a3a3a3;
    color: #444;
    font-size: 32px;
    line-height: 34px;
}

.wcs {
    position: absolute;
    top: 183px;
    right: 55px;
    gap: 8px;
    width: 70px;
    height: 26px;
    border: 2px solid #6c6c73;
    border-radius: 5px;
    background: #88888f;
    color: #3a3a3e;
    font-family: "Liberation Sans", sans-serif;
    font-size: 16px;
}

/* lines of the drawing stay visible through the bar */
.navbar {
    position: absolute;
    top: 242px;
    right: 4px;
    width: 46px;
    mix-blend-mode: screen;
}

.navbar svg {
    display: block;
}

.command {
    position: absolute;
    bottom: 0;
    left: 604px;
    right: 591px;
    display: flex;
    height: 40px;
    padding: 2px 1px;
    border-radius: 5px 5px 0 0;
    background: #4c4c4c;
}

.command-tools {
    display: flex;
    align-items: center;
    gap: 10px;
    width: 81px;
    padding-left: 11px;
    background: linear-gradient(#505050, #262626);
}

.grip {
    height: 26px;
    border-left: 2px dotted #888;
}

.command-tools button:nth-child(2) {
    margin-right: 3px;
}

.command-line {
    flex: 1;
    display: flex;
    align-items: center;
    padding: 0 5px 0 7px;
    border-radius: 3px;
    background: #b2b2b2;
}

.arrow.dark {
    margin: 0 12px 0 6px;
    border-top-color: #555;
}

.arrow.up {
    border: 6px solid transparent;
    border-top: 0;
    border-bottom-color: #111;
}

.command-line input {
    flex: 1;
    min-width: 0;
    outline: none;
    color: #222;
    font-size: 20px;
}

.command-line input::placeholder {
    color: #6c6c6c;
    font-style: italic;
    opacity: 1;
}

/* layout tabs and status bar */
.bottom {
    flex: none;
    border-top: 2px solid #505050;
}

.layouts {
    display: flex;
    height: 28px;
    padding-left: 8px;
}

.layout {
    position: relative;
    width: 84px;
    height: 25px;
    color: #bbb;
}

.layout svg {
    position: absolute;
    inset: 0;
    width: 100%;
    height: 100%;
}

.layout span {
    position: relative;
}

.layout.model {
    width: 86px;
    color: #fff;
    font-weight: bold;
}

.layout.first {
    margin: 0 -1px 0 -10px;
}

.layout-add {
    height: 24px;
    margin-left: 3px;
}

.status {
    display: flex;
    justify-content: flex-end;
    gap: 2px;
    height: 39px;
}

.seg {
    display: flex;
    align-items: stretch;
    padding: 0 1px;
    border: 1px solid #6c6c6c;
    border-width: 3px 1px 0;
    border-top-color: #7a7a7a;
    background: #505050;
}

.seg button {
    width: 34px;
}

.seg svg {
    width: 24px;
    height: 24px;
}

.seg .more {
    width: 24px;
}

.more::after,
.scale .arrow {
    border-width: 7px 5px 0;
}

.scales button {
    width: 36px;
}

.seg .scale {
    gap: 4px;
    width: 48px;
    font-size: 16px;
}

.seg .mode {
    width: 41px;
}

.info {
    align-items: center;
    padding: 0 10px;
    white-space: nowrap;
}
```
